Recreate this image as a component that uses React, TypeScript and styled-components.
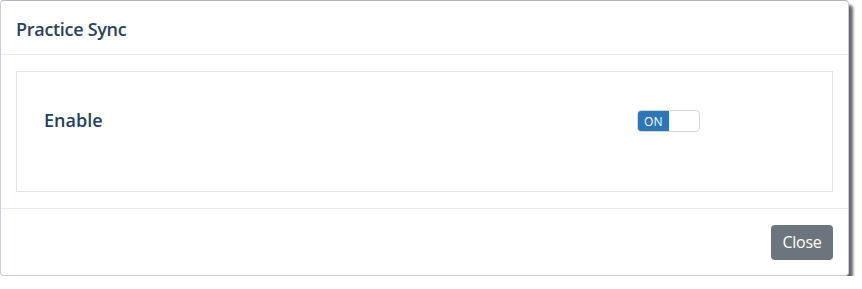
import React, { useState } from "react";
import styled, { createGlobalStyle } from "styled-components";

const GlobalStyle = createGlobalStyle`
  html, body {
    margin: 0;
    padding: 0;
    background: #ffffff;
  }
  body {
    font-family: "Open Sans", "Liberation Sans", sans-serif;
  }
`;

const Modal = styled.div`
  box-sizing: border-box;
  width: 849px;
  height: 276px;
  background: #ffffff;
  border: 1px solid #c9ced4;
  border-top-color: #aeb8c2;
  border-radius: 4px;
  box-shadow: 4px 5px 3px rgba(0, 0, 0, 0.6);
  display: flex;
  flex-direction: column;
`;

const Header = styled.div`
  height: 54px;
  box-sizing: border-box;
  padding: 2px 15px 0;
  display: flex;
  align-items: center;
  border-bottom: 1px solid #e9ecef;
`;

const Title = styled.h5`
  margin: 0;
  font-size: 18px;
  font-weight: 600;
  color: #2a4261;
  letter-spacing: -0.3px;
`;

const Body = styled.div`
  padding: 16px 15px;
`;

const Panel = styled.div`
  box-sizing: border-box;
  height: 121px;
  border: 1px solid #e3e5e8;
  padding: 38px 27px 0;
  display: grid;
  grid-template-columns: 593px auto;
  align-items: start;
`;

const Label = styled.div`
  font-size: 18px;
  font-weight: 600;
  color: #26405f;
  line-height: 21px;
`;

const Toggle = styled.button`
  box-sizing: border-box;
  width: 63px;
  height: 22px;
  padding: 0;
  border: 1px solid #d3d6da;
  border-radius: 4px;
  background: #ffffff;
  display: flex;
  overflow: hidden;
  cursor: pointer;
`;

const ToggleSide = styled.span<{ $on: boolean }>`
  width: 31px;
  height: 100%;
  display: flex;
  align-items: center;
  justify-content: center;
  font-family: "Open Sans", "Liberation Sans", sans-serif;
  font-size: 12px;
  color: ${(p) => (p.$on ? "#ffffff" : "#333333")};
  background: ${(p) => (p.$on ? "#2f76b6" : "transparent")};
`;

const Footer = styled.div`
  flex: 1;
  border-top: 1px solid #e9ecef;
  padding: 0 15px;
  display: flex;
  align-items: center;
  justify-content: flex-end;
`;

const CloseButton = styled.button`
  width: 62px;
  height: 35px;
  padding: 0;
  border: none;
  border-radius: 4px;
  background: #6c757d;
  color: #ffffff;
  font-family: "Open Sans", "Liberation Sans", sans-serif;
  font-size: 16px;
  letter-spacing: -0.3px;
  cursor: pointer;
`;

export default function App() {
  const [enabled, setEnabled] = useState(true);
  return (
    <>
      <GlobalStyle />
      <Modal>
        <Header>
          <Title>Practice Sync</Title>
        </Header>
        <Body>
          <Panel>
            <Label>Enable</Label>
            <Toggle onClick={() => setEnabled(!enabled)}>
              {enabled ? (
                <>
                  <ToggleSide $on>ON</ToggleSide>
                  <ToggleSide $on={false} />
                </>
              ) : (
                <>
                  <ToggleSide $on={false} />
                  <ToggleSide $on={false}>OFF</ToggleSide>
                </>
              )}
            </Toggle>
          </Panel>
        </Body>
        <Footer>
          <CloseButton>Close</CloseButton>
        </Footer>
      </Modal>
    </>
  );
}
